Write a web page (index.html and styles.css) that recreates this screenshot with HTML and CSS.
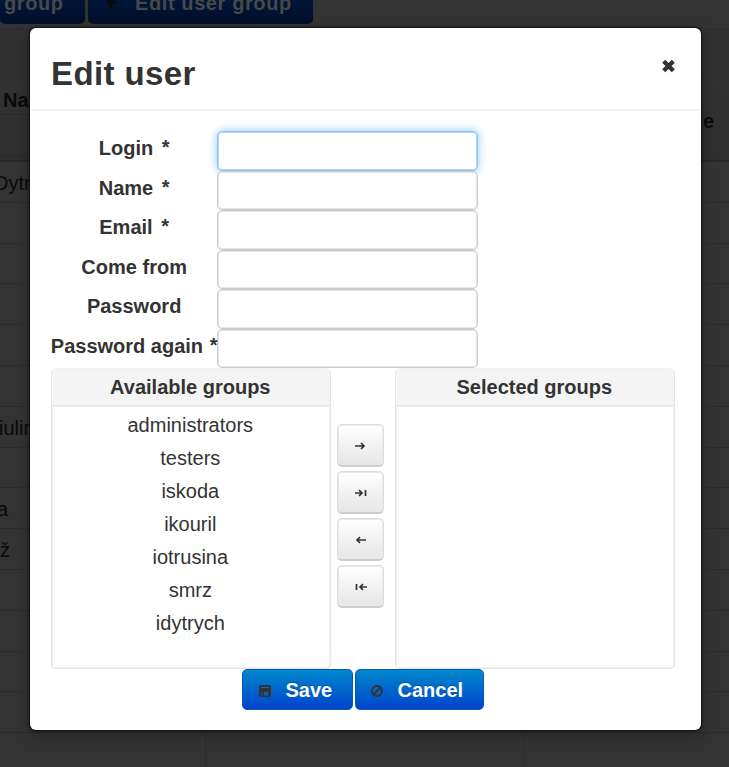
FILE: index.html
```
<!DOCTYPE html>
<html lang="en">
<head>
<meta charset="utf-8">
<title>Edit user</title>
<link rel="stylesheet" href="styles.css">
</head>
<body>
<div class="page">
  <div class="toolbar">
    <div class="tool tool-first">group</div>
    <div class="tool tool-edit"><svg class="plus" width="12" height="12" viewBox="0 0 12 12"><path d="M6 1v10M1 6h10" stroke="#080808" stroke-width="3"/></svg><span>Edit user group</span></div>
  </div>
  <div class="band"></div>
  <div class="thead">
    <div class="th-name"><div class="th-title">Na</div><div class="th-filter"></div></div>
    <div class="th-role">e</div>
  </div>
  <div class="row"><span class="dy">Dytr</span></div>
  <div class="row"></div>
  <div class="row"></div>
  <div class="row"></div>
  <div class="row"></div>
  <div class="row"></div>
  <div class="row"><span class="iu">iulin</span></div>
  <div class="row"></div>
  <div class="row"><span class="a">a</span></div>
  <div class="row"><span>ž</span></div>
  <div class="row"></div>
  <div class="row"></div>
  <div class="row"></div>
  <div class="row"></div>
  <div class="row foot"><i></i><i></i><i></i></div>
</div>
<div class="modal">
  <div class="header">
    <h1>Edit user</h1>
    <svg class="close" width="15" height="14" viewBox="0 0 15 14"><path d="M2.7 2.3 12.3 11.7M12.3 2.3 2.7 11.7" stroke="#333" stroke-width="4.3"/></svg>
  </div>
  <div class="body">
    <div class="form">
      <label>Login <b>*</b></label><input class="focused" type="text">
      <label>Name <b>*</b></label><input type="text">
      <label>Email <b>*</b></label><input type="text">
      <label>Come from</label><input type="text">
      <label>Password</label><input type="text">
      <label>Password again <b>*</b></label><input type="text">
    </div>
    <div class="picker">
      <div class="list">
        <div class="caption">Available groups</div>
        <ul><li>administrators</li><li>testers</li><li>iskoda</li><li>ikouril</li><li>iotrusina</li><li>smrz</li><li>idytrych</li></ul>
      </div>
      <div class="moves">
        <button><svg width="16" height="10" viewBox="0 0 16 10"><path d="M2 5h9M8 2l3 3-3 3"/></svg></button>
        <button><svg width="16" height="10" viewBox="0 0 16 10"><path d="M2 5h7M6 2l3 3-3 3M12.5 2v6"/></svg></button>
        <button><svg width="16" height="10" viewBox="0 0 16 10"><path d="M13 5H4M7 2L4 5l3 3"/></svg></button>
        <button><svg width="16" height="10" viewBox="0 0 16 10"><path d="M14 5H7M10 2L7 5l3 3M3.5 2v6"/></svg></button>
      </div>
      <div class="list">
        <div class="caption">Selected groups</div>
        <ul></ul>
      </div>
    </div>
    <div class="actions">
      <button class="primary save"><svg width="14" height="14" viewBox="0 0 14 14"><path fill="#333" fill-rule="evenodd" d="M3 1h8q2 0 2 2v8q0 2-2 2H3q-2 0-2-2V3q0-2 2-2zM3 3v1h8V3zM3.5 8v3.5h1V8zM6 8v3.5h4V8z"/></svg>Save</button>
      <button class="primary cancel"><svg width="14" height="14" viewBox="0 0 14 14"><path fill="none" stroke="#333" stroke-width="2" d="M7 2a5 5 0 1 0 0 10A5 5 0 1 0 7 2M3.8 10.2l6.4-6.4"/></svg>Cancel</button>
    </div>
  </div>
</div>
</body>
</html>
```
FILE: styles.css
```
* { box-sizing: border-box; }
body { margin: 0; width: 729px; height: 767px; overflow: hidden; position: relative; background: #333; color: #333; font: 20px/24px "Liberation Sans", Arial, sans-serif; }
button, input { font: inherit; margin: 0; padding: 0; }

.page { height: 767px; overflow: hidden; color: #0a0a0a; }
.toolbar { display: flex; gap: 3px; height: 29px; border-bottom: 1px solid #2d2d2d; }
.tool { height: 24px; background: linear-gradient(#001538, #000f2b); border-bottom: 1px solid #071126; border-radius: 0 0 5px 5px; color: #484848; font-weight: bold; letter-spacing: .6px; line-height: 6px; white-space: nowrap; }
.tool-first { width: 85px; padding-left: 4px; }
.tool-edit { width: 225px; padding-left: 17px; display: flex; }
.plus { width: 12px; margin: -4px 18px 0 0; flex: none; }
.band { height: 50px; background: #313131; border-bottom: 1px solid #2e2e2e; }
.thead { height: 83px; display: flex; justify-content: space-between; background: linear-gradient(#323232, #2e2e2e); border-bottom: 2px solid #282828; font-weight: bold; }
.th-name { width: 205px; }
.th-title { height: 36px; padding: 9px 0 0 3px; border-bottom: 1px solid #292929; }
.th-filter { height: 42px; border-bottom: 1px solid #2a2a2a; }
.th-role { width: 26px; padding-top: 30px; }
.row { height: 40.8px; border-bottom: 1px solid #2c2c2c; line-height: 43px; white-space: nowrap; }
.row .dy { margin-left: -6px; }
.row .iu { margin-left: -1px; }
.row .a { margin-left: -3px; }
.foot { display: flex; border: 0; }
.foot i { width: 206px; flex: none; border-right: 1px solid #2c2c2c; }
.foot i + i { width: 318px; }
.foot i:last-child { border: 0; }

.modal { position: absolute; left: 29.5px; top: 28px; width: 671.7px; height: 701.5px; background: #fff; border-radius: 6px; box-shadow: 0 0 2px 1px rgba(0,0,0,.65), 0 4px 14px rgba(0,0,0,.35); }
.header { height: 83px; margin: 0 1px; padding: 24px 24.7px 0 20.5px; border-bottom: 2px solid #f4f4f4; display: flex; justify-content: space-between; }
h1 { margin: 0; font-size: 33px; line-height: 43px; letter-spacing: .4px; }
.close { margin-top: 7px; }
.body { padding: 20px 26px 0 21.3px; }
.form { display: grid; grid-template-columns: 166.7px 260.5px; grid-auto-rows: 39.5px; }
.form label { font-weight: bold; text-align: center; line-height: 34px; white-space: nowrap; }
.form b { margin-left: 3px; position: relative; top: -1px; }
.form label:last-of-type b { margin-left: 1px; }
.form input { height: 39.5px; border: 1px solid #ccc; border-radius: 5px; background: #fff; outline: 0; box-shadow: inset 0 0 0 1px #e6e6e6; }
.form .focused { border-color: #8cc6f4; box-shadow: inset 0 0 0 1px #b0d8f8, 0 0 10px rgba(82,168,236,.65); }
.picker { display: grid; grid-template-columns: 280px 64px 280px; height: 301px; }
.list { border: 1px solid #e4e4e4; border-top-color: #f0f0f0; border-radius: 5px; box-shadow: inset 0 0 0 1px #f2f2f2; }
.caption { height: 38px; line-height: 37px; background: #f4f4f4; border-bottom: 2px solid #e9e9e9; font-weight: bold; text-align: center; }
.list .caption, .list ul { padding-right: 1px; }
ul { margin: 0; padding: 2px 0 0; list-style: none; text-align: center; }
li { height: 33px; line-height: 33px; }
.moves { display: flex; flex-direction: column; align-items: center; gap: 4px; padding: 56px 4px 0 0; }
.moves button { width: 47px; height: 43px; border: 1px solid #ddd; border-bottom: 2px solid #ccc; border-radius: 5px; background: linear-gradient(#fff, #e6e6e6); box-shadow: inset 0 0 0 1px #e9e9e9; display: flex; align-items: center; justify-content: center; }
.moves svg { fill: none; stroke: #333; stroke-width: 1.7; margin-top: 2px; }
.actions { display: flex; gap: 2px; margin-left: 191.7px; }
.primary { height: 41px; border: 1px solid #0a58b5; border-radius: 5px; background: linear-gradient(#08c, #04c); color: #fff; font-weight: bold; text-shadow: 0 -1px 0 rgba(0,0,0,.25); display: flex; align-items: center; padding: 1px 0 0 15px; gap: 13px; }
.primary svg { margin-top: 1px; }
.save { width: 111px; }
.cancel { width: 129px; padding-left: 14px; }
```
